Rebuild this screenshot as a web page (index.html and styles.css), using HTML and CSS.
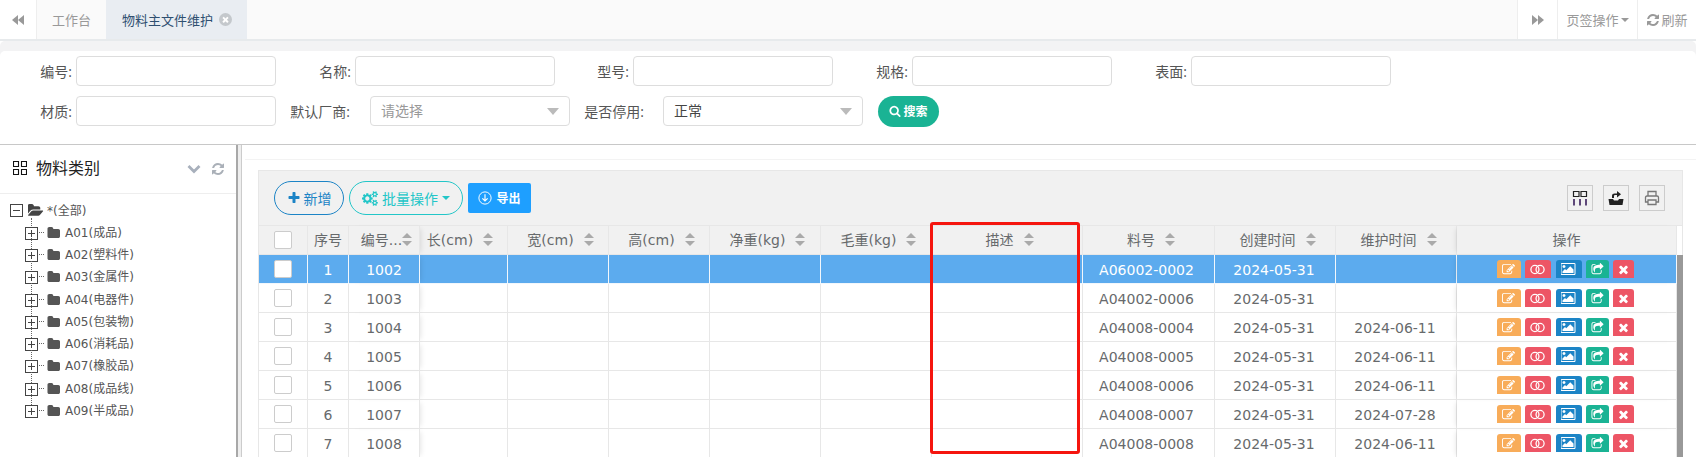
FILE: index.html
```html
<!DOCTYPE html>
<html lang="zh">
<head>
<meta charset="utf-8">
<title>物料主文件维护</title>
<link rel="stylesheet" href="styles.css">
</head>
<body>
<svg class="sprite" xmlns="http://www.w3.org/2000/svg">
  <symbol id="i-refresh" viewBox="0 0 1792 1792"><path d="M1639 1056q0 5-1 7-64 268-268 434.5t-478 166.5q-146 0-282.5-55t-243.5-157l-129 129q-19 19-45 19t-45-19-19-45v-448q0-26 19-45t45-19h448q26 0 45 19t19 45-19 45l-137 137q71 66 161 102t187 36q134 0 250-65t186-179q11-17 53-117 8-23 30-23h192q13 0 22.5 9.5t9.5 22.5zm25-800v448q0 26-19 45t-45 19h-448q-26 0-45-19t-19-45 19-45l138-138q-148-137-349-137-134 0-250 65t-186 179q-11 17-53 117-8 23-30 23h-199q-13 0-22.5-9.5t-9.5-22.5v-7q65-268 270-434.5t480-166.5q146 0 284 55.5t245 156.5l130-129q19-19 45-19t45 19 19 45z"/></symbol>
  <symbol id="i-search" viewBox="0 0 1792 1792"><path d="M1216 832q0-185-131.5-316.5t-316.5-131.5-316.5 131.5-131.5 316.5 131.5 316.5 316.5 131.5 316.5-131.5 131.5-316.5zm512 832q0 52-38 90t-90 38q-54 0-90-38l-343-342q-179 124-399 124-143 0-273.5-55.5t-225-150-150-225-55.5-273.5 55.5-273.5 150-225 225-150 273.5-55.5 273.5 55.5 225 150 150 225 55.5 273.5q0 220-124 399l343 343q37 37 37 90z"/></symbol>
  <symbol id="i-plus" viewBox="0 0 1792 1792"><path d="M1600 736v192q0 40-28 68t-68 28h-416v416q0 40-28 68t-68 28h-192q-40 0-68-28t-28-68v-416h-416q-40 0-68-28t-28-68v-192q0-40 28-68t68-28h416v-416q0-40 28-68t68-28h192q40 0 68 28t28 68v416h416q40 0 68 28t28 68z"/></symbol>
  <symbol id="i-times" viewBox="0 0 1792 1792"><path d="M1490 1322q0 40-28 68l-136 136q-28 28-68 28t-68-28l-294-294-294 294q-28 28-68 28t-68-28l-136-136q-28-28-28-68t28-68l294-294-294-294q-28-28-28-68t28-68l136-136q28-28 68-28t68 28l294 294 294-294q28-28 68-28t68 28l136 136q28 28 28 68t-28 68l-294 294 294 294q28 28 28 68z"/></symbol>
  <symbol id="i-folder" viewBox="0 128 1728 1408" preserveAspectRatio="none"><path d="M1728 608v704q0 92-66 158t-158 66h-1216q-92 0-158-66t-66-158v-960q0-92 66-158t158-66h320q92 0 158 66t66 158v32h672q92 0 158 66t66 158z"/></symbol>
  <symbol id="i-folder-open" viewBox="0 0 1920 1792"><path d="M1815 952q0 31-31 66l-336 396q-43 51-120.5 86.5t-143.5 35.5h-1088q-34 0-60.5-13t-26.5-43q0-31 31-66l336-396q43-51 120.5-86.5t143.5-35.5h1088q34 0 60.5 13t26.5 43zm-343-344v160h-832q-94 0-197 47.5t-164 119.5l-337 396-5 6q0-4-.5-12.5t-.5-12.5v-960q0-92 66-158t158-66h320q92 0 158 66t66 158v32h544q92 0 158 66t66 158z"/></symbol>
  <symbol id="i-edit" viewBox="0 0 1792 1792"><path d="M888 1184l116-116-152-152-116 116v56h96v96h56zm440-720q-16-16-33 1l-350 350q-17 17-1 33t33-1l350-350q17-17 1-33zm80 594v190q0 119-84.5 203.5t-203.5 84.5h-832q-119 0-203.5-84.5t-84.5-203.5v-832q0-119 84.5-203.5t203.5-84.5h832q63 0 117 25 15 7 18 23 3 17-9 29l-49 49q-14 14-32 8-23-6-45-6h-832q-66 0-113 47t-47 113v832q0 66 47 113t113 47h832q66 0 113-47t47-113v-126q0-13 9-22l64-64q15-15 35-7t20 29zm-96-738l288 288-672 672h-288v-288zm444 132l-92 92-288-288 92-92q28-28 68-28t68 28l152 152q28 28 28 68t-28 68z"/></symbol>
  <symbol id="i-share" viewBox="0 0 1792 1792"><path d="M1472 989v259q0 119-84.5 203.5t-203.5 84.5h-832q-119 0-203.5-84.5t-84.5-203.5v-832q0-119 84.5-203.5t203.5-84.5h255q13 0 22.5 9.5t9.5 22.5q0 27-26 32-77 26-133 60-10 4-16 4h-112q-66 0-113 47t-47 113v832q0 66 47 113t113 47h832q66 0 113-47t47-113v-214q0-19 18-29 28-13 54-37 16-16 35-8 21 9 21 29zm237-496l-384 384q-18 19-45 19-12 0-25-5-39-17-39-59v-192h-160q-323 0-438 131-119 137-74 473 3 23-20 34-8 2-12 2-16 0-26-13-10-14-21-31t-39.5-68.5-49.5-99.5-38.5-114-17.5-122q0-49 3.5-91t14-90 28-88 47-81.5 68.5-74 94.5-61.5 124.5-48.5 159.5-30.5 196.5-11h160v-192q0-42 39-59 13-5 25-5 26 0 45 19l384 384q19 19 19 45t-19 45z"/></symbol>
  <symbol id="i-picture" viewBox="0 0 1920 1792"><path d="M576 576q0 80-56 136t-136 56-136-56-56-136 56-136 136-56 136 56 56 136zm1024 384v448h-1408v-192l320-320 160 160 512-512zm96-704h-1600q-13 0-22.5 9.5t-9.5 22.5v1216q0 13 9.5 22.5t22.5 9.5h1600q13 0 22.5-9.5t9.5-22.5v-1216q0-13-9.5-22.5t-22.5-9.5zm160 32v1216q0 66-47 113t-113 47h-1600q-66 0-113-47t-47-113v-1216q0-66 47-113t113-47h1600q66 0 113 47t47 113z"/></symbol>
  <symbol id="i-cogs" viewBox="0 0 1920 1792"><path d="M896 896q0-106-75-181t-181-75-181 75-75 181 75 181 181 75 181-75 75-181zm768 512q0-52-38-90t-90-38-90 38-38 90q0 53 37.5 90.5t90.5 37.5 90.5-37.5 37.5-90.5zm0-1024q0-52-38-90t-90-38-90 38-38 90q0 53 37.5 90.5t90.5 37.5 90.5-37.5 37.5-90.5zm-384 421v185q0 10-7 19.5t-16 10.5l-155 24q-11 35-32 76 34 48 90 115 7 11 7 20 0 12-7 19-23 30-82.5 89.5t-78.5 59.5q-11 0-21-7l-115-90q-37 19-77 31-11 108-23 155-7 24-30 24h-186q-11 0-20-7.5t-10-17.5l-23-153q-34-10-75-31l-118 89q-7 7-20 7-11 0-21-8-144-133-144-160 0-9 7-19 10-14 41-53t47-61q-23-44-35-82l-152-24q-10-1-17-9.5t-7-19.5v-185q0-10 7-19.5t16-10.5l155-24q11-35 32-76-34-48-90-115-7-11-7-20 0-12 7-20 22-30 82-89t79-59q11 0 21 7l115 90q34-18 77-32 11-108 23-154 7-24 30-24h186q11 0 20 7.5t10 17.5l23 153q34 10 75 31l118-89q8-7 20-7 11 0 21 8 144 133 144 160 0 8-7 19-12 16-42 54t-45 60q23 48 34 82l152 23q10 2 17 10.5t7 19.5zm640 533v140q0 16-149 31-12 27-30 52 51 113 51 138 0 4-4 7-122 71-124 71-8 0-46-47t-52-68q-20 2-30 2t-30-2q-14 21-52 68t-46 47q-2 0-124-71-4-3-4-7 0-25 51-138-18-25-30-52-149-15-149-31v-140q0-16 149-31 13-29 30-52-51-113-51-138 0-4 4-7 4-2 35-20t59-34 30-16q8 0 46 46.5t52 67.5q20-2 30-2t30 2q51-71 92-112l6-2q4 0 124 70 4 3 4 7 0 25-51 138 17 23 30 52 149 15 149 31zm0-1024v140q0 16-149 31-12 27-30 52 51 113 51 138 0 4-4 7-122 71-124 71-8 0-46-47t-52-68q-20 2-30 2t-30-2q-14 21-52 68t-46 47q-2 0-124-71-4-3-4-7 0-25 51-138-18-25-30-52-149-15-149-31v-140q0-16 149-31 13-29 30-52-51-113-51-138 0-4 4-7 4-2 35-20t59-34 30-16q8 0 46 46.5t52 67.5q20-2 30-2t30 2q51-71 92-112l6-2q4 0 124 70 4 3 4 7 0 25-51 138 17 23 30 52 149 15 149 31z"/></symbol>
  <symbol id="i-rings" viewBox="0 0 16 12"><circle cx="5.2" cy="6" r="4.4" fill="none" stroke="currentColor" stroke-width="1.4"/><circle cx="10.8" cy="6" r="4.4" fill="none" stroke="currentColor" stroke-width="1.4"/></symbol>
  <symbol id="i-tb-cols" viewBox="0 0 16 16"><path d="M1.5 1.5h5.5v5h-5.500zM9 1.500h5.500v5H9z" fill="none" stroke="#222" stroke-width="1.2"/><path d="M2 9v6.500M8 9v6.500M14 9v6.500" fill="none" stroke="#3a1f5c" stroke-width="1.600"/></symbol>
  <symbol id="i-tb-export" viewBox="0 0 16 16"><path d="M0.500 9h4.500l1 1.500h4L11 9h4.500l-1 6H1.500z" fill="#222"/><path d="M4 8V5.500q0-2 2.500-2H9V1l4 3.200L9 7.400V5H7q-1 0-1 1v2z" fill="#222"/></symbol>
  <symbol id="i-tb-print" viewBox="0 0 16 16"><path d="M4 6V1.500h8V6M4 12H1.500V7.500q0-1.500 1.500-1.500h10q1.500 0 1.500 1.500V12H12M4 10h8v4.500H4z" fill="none" stroke="#777" stroke-width="1.300"/></symbol>
  <symbol id="i-download" viewBox="0 0 16 16"><circle cx="8" cy="8" r="7" fill="none" stroke="currentColor" stroke-width="1.100"/><path d="M8 3.800v7.400M5 8.400l3 3 3-3" fill="none" stroke="currentColor" stroke-width="1.300"/></symbol>
  <symbol id="i-title" viewBox="0 0 14 14"><path d="M.5.500h5v5h-5zM8.500.500h5v5h-5zM.5 8.500h5v5h-5zM8.500 8.500h5v5h-5z" fill="none" stroke="#111" stroke-width="1.100"/></symbol>
  <symbol id="i-chevron" viewBox="0 0 14 10"><path d="M1.500 2l5.500 5.500L12.500 2" fill="none" stroke="currentColor" stroke-width="2.800"/></symbol>
</svg>

<header class="tabbar">
  <div class="tab-nav"><span class="tri-left"></span><span class="tri-left"></span></div>
  <div class="tab">工作台</div>
  <div class="tab tab-active">物料主文件维护<span class="tab-close"><svg class="ico-close"><use href="#i-times"/></svg></span></div>
  <div class="tab-spacer"></div>
  <div class="tab-tool tool-fwd"><span class="tri-right"></span><span class="tri-right"></span></div>
  <div class="tab-tool tool-ops">页签操作<span class="caret"></span></div>
  <div class="tab-tool tool-refresh"><svg class="ico-13"><use href="#i-refresh"/></svg>刷新</div>
</header>

<section class="filter">
  <div class="form-row">
    <div class="field field-first"><label class="lbl">编号:</label><input class="ctl" type="text"></div>
    <div class="field"><label class="lbl">名称:</label><input class="ctl" type="text"></div>
    <div class="field field-narrow"><label class="lbl">型号:</label><input class="ctl" type="text"></div>
    <div class="field"><label class="lbl">规格:</label><input class="ctl" type="text"></div>
    <div class="field"><label class="lbl">表面:</label><input class="ctl" type="text"></div>
  </div>
  <div class="form-row">
    <div class="field field-first"><label class="lbl">材质:</label><input class="ctl" type="text"></div>
    <div class="field field-sel1"><label class="lbl">默认厂商:</label><div class="ctl sel sel-ph"><span class="sel-text">请选择</span><span class="sel-arrow"></span></div></div>
    <div class="field field-sel2"><label class="lbl">是否停用:</label><div class="ctl sel"><span class="sel-text">正常</span><span class="sel-arrow"></span></div></div>
    <button class="btn-search"><svg class="ico-12"><use href="#i-search"/></svg>搜索</button>
  </div>
</section>

<main class="main">
  <aside class="side">
    <div class="side-head">
      <svg class="ico-title"><use href="#i-title"/></svg>
      <span class="side-title">物料类别</span>
      <svg class="ico-chev"><use href="#i-chevron"/></svg>
      <svg class="ico-srefresh"><use href="#i-refresh"/></svg>
    </div>
    <ul class="tree">
      <li class="node node-root"><span class="box box-minus"></span><svg class="ico-fopen"><use href="#i-folder-open"/></svg><span class="node-text">*(全部)</span></li>
      <li class="node"><span class="box"></span><span class="dots"></span><svg class="ico-folder"><use href="#i-folder"/></svg><span class="node-text">A01(成品)</span></li>
      <li class="node"><span class="box"></span><span class="dots"></span><svg class="ico-folder"><use href="#i-folder"/></svg><span class="node-text">A02(塑料件)</span></li>
      <li class="node"><span class="box"></span><span class="dots"></span><svg class="ico-folder"><use href="#i-folder"/></svg><span class="node-text">A03(金属件)</span></li>
      <li class="node"><span class="box"></span><span class="dots"></span><svg class="ico-folder"><use href="#i-folder"/></svg><span class="node-text">A04(电器件)</span></li>
      <li class="node"><span class="box"></span><span class="dots"></span><svg class="ico-folder"><use href="#i-folder"/></svg><span class="node-text">A05(包装物)</span></li>
      <li class="node"><span class="box"></span><span class="dots"></span><svg class="ico-folder"><use href="#i-folder"/></svg><span class="node-text">A06(消耗品)</span></li>
      <li class="node"><span class="box"></span><span class="dots"></span><svg class="ico-folder"><use href="#i-folder"/></svg><span class="node-text">A07(橡胶品)</span></li>
      <li class="node"><span class="box"></span><span class="dots"></span><svg class="ico-folder"><use href="#i-folder"/></svg><span class="node-text">A08(成品线)</span></li>
      <li class="node node-last"><span class="box"></span><span class="dots"></span><svg class="ico-folder"><use href="#i-folder"/></svg><span class="node-text">A09(半成品)</span></li>
    </ul>
  </aside>
  <div class="splitter"></div>
  <section class="content">
    <div class="grid-panel">
      <div class="toolbar">
        <button class="pill pill-blue"><svg class="ico-14"><use href="#i-plus"/></svg>新增</button>
        <button class="pill pill-teal"><svg class="ico-cogs"><use href="#i-cogs"/></svg>批量操作<span class="caret caret-teal"></span></button>
        <button class="btn-export"><svg class="ico-dl"><use href="#i-download"/></svg>导出</button>
        <div class="tool-right">
          <button class="tool-btn"><svg class="ico-tb"><use href="#i-tb-cols"/></svg></button>
          <button class="tool-btn"><svg class="ico-tb"><use href="#i-tb-export"/></svg></button>
          <button class="tool-btn"><svg class="ico-tb"><use href="#i-tb-print"/></svg></button>
        </div>
      </div>
      <div class="table-wrap">
        <table class="grid">
          <colgroup>
            <col class="c-check"><col class="c-seq"><col class="c-code"><col class="c-len"><col class="c-wid"><col class="c-hei"><col class="c-net"><col class="c-gross"><col class="c-desc"><col class="c-part"><col class="c-date"><col class="c-date"><col class="c-act">
          </colgroup>
          <thead>
            <tr>
              <th><span class="check"></span></th>
              <th><span class="th-in">序号</span></th>
              <th class="fix-l"><span class="th-in th-s">编号...<span class="sort sort-tight"></span></span></th>
              <th><span class="th-in th-len">长(cm)<span class="sort"></span></span></th>
              <th><span class="th-in th-s">宽(cm)<span class="sort"></span></span></th>
              <th><span class="th-in th-s">高(cm)<span class="sort"></span></span></th>
              <th><span class="th-in th-s">净重(kg)<span class="sort"></span></span></th>
              <th><span class="th-in th-s">毛重(kg)<span class="sort"></span></span></th>
              <th><span class="th-in th-s">描述<span class="sort"></span></span></th>
              <th><span class="th-in th-s">料号<span class="sort"></span></span></th>
              <th><span class="th-in th-s">创建时间<span class="sort"></span></span></th>
              <th><span class="th-in th-s">维护时间<span class="sort"></span></span></th>
              <th class="fix-r"><span class="th-in">操作</span></th>
            </tr>
          </thead>
          <tbody>
            <tr class="sel-row"><td><span class="check"></span></td><td class="txt">1</td><td class="txt fix-l">1002</td><td></td><td></td><td></td><td></td><td></td><td></td><td class="txt nudge-2">A06002-0002</td><td class="txt nudge-1">2024-05-31</td><td class="txt nudge-1"></td><td class="fix-r"><div class="acts"><span class="act a-edit"><svg class="ai"><use href="#i-edit"/></svg></span><span class="act a-ring"><svg class="ai-ring"><use href="#i-rings"/></svg></span><span class="act a-pic"><svg class="ai-pic"><use href="#i-picture"/></svg></span><span class="act a-share"><svg class="ai"><use href="#i-share"/></svg></span><span class="act a-del"><svg class="ai"><use href="#i-times"/></svg></span></div></td></tr>
            <tr><td><span class="check"></span></td><td class="txt">2</td><td class="txt fix-l">1003</td><td></td><td></td><td></td><td></td><td></td><td></td><td class="txt nudge-2">A04002-0006</td><td class="txt nudge-1">2024-05-31</td><td class="txt nudge-1"></td><td class="fix-r"><div class="acts"><span class="act a-edit"><svg class="ai"><use href="#i-edit"/></svg></span><span class="act a-ring"><svg class="ai-ring"><use href="#i-rings"/></svg></span><span class="act a-pic"><svg class="ai-pic"><use href="#i-picture"/></svg></span><span class="act a-share"><svg class="ai"><use href="#i-share"/></svg></span><span class="act a-del"><svg class="ai"><use href="#i-times"/></svg></span></div></td></tr>
            <tr><td><span class="check"></span></td><td class="txt">3</td><td class="txt fix-l">1004</td><td></td><td></td><td></td><td></td><td></td><td></td><td class="txt nudge-2">A04008-0004</td><td class="txt nudge-1">2024-05-31</td><td class="txt nudge-1">2024-06-11</td><td class="fix-r"><div class="acts"><span class="act a-edit"><svg class="ai"><use href="#i-edit"/></svg></span><span class="act a-ring"><svg class="ai-ring"><use href="#i-rings"/></svg></span><span class="act a-pic"><svg class="ai-pic"><use href="#i-picture"/></svg></span><span class="act a-share"><svg class="ai"><use href="#i-share"/></svg></span><span class="act a-del"><svg class="ai"><use href="#i-times"/></svg></span></div></td></tr>
            <tr><td><span class="check"></span></td><td class="txt">4</td><td class="txt fix-l">1005</td><td></td><td></td><td></td><td></td><td></td><td></td><td class="txt nudge-2">A04008-0005</td><td class="txt nudge-1">2024-05-31</td><td class="txt nudge-1">2024-06-11</td><td class="fix-r"><div class="acts"><span class="act a-edit"><svg class="ai"><use href="#i-edit"/></svg></span><span class="act a-ring"><svg class="ai-ring"><use href="#i-rings"/></svg></span><span class="act a-pic"><svg class="ai-pic"><use href="#i-picture"/></svg></span><span class="act a-share"><svg class="ai"><use href="#i-share"/></svg></span><span class="act a-del"><svg class="ai"><use href="#i-times"/></svg></span></div></td></tr>
            <tr><td><span class="check"></span></td><td class="txt">5</td><td class="txt fix-l">1006</td><td></td><td></td><td></td><td></td><td></td><td></td><td class="txt nudge-2">A04008-0006</td><td class="txt nudge-1">2024-05-31</td><td class="txt nudge-1">2024-06-11</td><td class="fix-r"><div class="acts"><span class="act a-edit"><svg class="ai"><use href="#i-edit"/></svg></span><span class="act a-ring"><svg class="ai-ring"><use href="#i-rings"/></svg></span><span class="act a-pic"><svg class="ai-pic"><use href="#i-picture"/></svg></span><span class="act a-share"><svg class="ai"><use href="#i-share"/></svg></span><span class="act a-del"><svg class="ai"><use href="#i-times"/></svg></span></div></td></tr>
            <tr><td><span class="check"></span></td><td class="txt">6</td><td class="txt fix-l">1007</td><td></td><td></td><td></td><td></td><td></td><td></td><td class="txt nudge-2">A04008-0007</td><td class="txt nudge-1">2024-05-31</td><td class="txt nudge-1">2024-07-28</td><td class="fix-r"><div class="acts"><span class="act a-edit"><svg class="ai"><use href="#i-edit"/></svg></span><span class="act a-ring"><svg class="ai-ring"><use href="#i-rings"/></svg></span><span class="act a-pic"><svg class="ai-pic"><use href="#i-picture"/></svg></span><span class="act a-share"><svg class="ai"><use href="#i-share"/></svg></span><span class="act a-del"><svg class="ai"><use href="#i-times"/></svg></span></div></td></tr>
            <tr><td><span class="check"></span></td><td class="txt">7</td><td class="txt fix-l">1008</td><td></td><td></td><td></td><td></td><td></td><td></td><td class="txt nudge-2">A04008-0008</td><td class="txt nudge-1">2024-05-31</td><td class="txt nudge-1">2024-06-11</td><td class="fix-r"><div class="acts"><span class="act a-edit"><svg class="ai"><use href="#i-edit"/></svg></span><span class="act a-ring"><svg class="ai-ring"><use href="#i-rings"/></svg></span><span class="act a-pic"><svg class="ai-pic"><use href="#i-picture"/></svg></span><span class="act a-share"><svg class="ai"><use href="#i-share"/></svg></span><span class="act a-del"><svg class="ai"><use href="#i-times"/></svg></span></div></td></tr>
          </tbody>
        </table>
        <div class="scrollbar"></div>
      </div>
      <div class="highlight"></div>
    </div>
  </section>
</main>
</body>
</html>
```

FILE: styles.css
```css
* { box-sizing: border-box; }
html, body { margin: 0; padding: 0; }
body {
  width: 1696px;
  height: 457px;
  overflow: hidden;
  background: #fff;
  font-family: "Open Sans", "Noto Sans CJK SC", sans-serif;
  font-size: 13px;
  color: #676a6c;
}
.sprite { display: none; }
svg { fill: currentColor; display: block; }
button { font-family: inherit; cursor: pointer; padding: 0; }

/* tab bar */
.tabbar {
  display: flex;
  height: 41px;
  background: #fafafa;
  border-bottom: 2px solid #e7eaec;
  color: #999;
}
.tab-nav {
  width: 37px;
  padding-right: 1px;
  background: #fff;
  border-right: 1px solid #eee;
  display: flex;
  align-items: center;
  justify-content: center;
}
.tri-left, .tri-right { width: 0; height: 0; border-top: 5.5px solid transparent; border-bottom: 5.5px solid transparent; }
.tri-left { border-right: 6px solid #999; }
.tri-right { border-left: 6px solid #999; }
.tab {
  display: flex;
  align-items: center;
  padding: 0 15px;
  width: 69px;
  justify-content: center;
  color: #999;
  font-size: 13px;
}
.tab-active {
  width: 141px;
  background: #e9edf2;
  color: #2f4f70;
  padding: 0 0 0 16px;
  justify-content: flex-start;
}
.tab-close {
  width: 13px;
  height: 13px;
  margin-left: 6px;
  border-radius: 50%;
  background: #c4c8cc;
  color: #fff;
  display: flex;
  align-items: center;
  justify-content: center;
}
.ico-close { width: 9px; height: 9px; }
.tab-spacer { flex: 1; }
.tab-tool {
  display: flex;
  align-items: center;
  justify-content: center;
  background: #fff;
  border-left: 1px solid #eee;
  color: #999;
}
.tool-fwd { width: 40px; }
.tool-ops { width: 80px; }
.tool-refresh { width: 59px; }
.caret {
  display: inline-block;
  width: 0;
  height: 0;
  margin-left: 2px;
  border-top: 4px solid #999;
  border-left: 4px solid transparent;
  border-right: 4px solid transparent;
}
.ico-13 { width: 14px; height: 14px; margin-right: 1px; }
.ico-12 { width: 12px; height: 12px; margin-right: 2px; }

/* filter */
.filter {
  margin-top: 10px;
  height: 94px;
  padding-top: 5px;
  background: #fff;
  border-radius: 5px 5px 0 0;
  border-bottom: 1px solid #c8c8c8;
  box-shadow: 0 -10px 0 0 #f3f3f4, 0 -1px 2px rgba(0,0,0,.05);
  display: flex;
  flex-direction: column;
  gap: 10px;
}
.form-row { display: flex; align-items: center; height: 30px; }
.field { display: flex; align-items: center; justify-content: flex-end; width: 279px; }
.field-narrow { width: 278px; }
.field-first { width: 276px; }
.field-sel1 { width: 294px; }
.field-sel1 .lbl { margin-right: 20px; }
.field-sel2 { width: 293px; }
.field-sel2 .lbl { margin-right: 19px; }
.lbl { margin-right: 4px; font-size: 14px; color: #555; white-space: nowrap; }
.ctl {
  width: 200px;
  height: 30px;
  flex: none;
  border: 1px solid #ddd;
  border-radius: 4px;
  background: #fff;
  outline: none;
}
.sel {
  display: flex;
  align-items: center;
  justify-content: space-between;
  padding: 0 10px 0 10px;
  font-size: 14px;
  color: #444;
}
.sel-text { padding-bottom: 2px; }
.sel-ph { color: #999; }
.sel-arrow {
  width: 0;
  height: 0;
  border-top: 7px solid #bbb;
  border-left: 6px solid transparent;
  border-right: 6px solid transparent;
}
.btn-search {
  margin-left: 15px;
  width: 61px;
  height: 31px;
  border: 0;
  border-radius: 16px;
  background: #1ab394;
  color: #fff;
  font-size: 12px;
  font-weight: 700;
  display: flex;
  align-items: center;
  justify-content: center;
}

/* main */
.main { display: flex; height: 312px; }
.side { width: 236px; flex: none; }
.side-head {
  height: 49px;
  border-bottom: 1px solid #eee;
  display: flex;
  align-items: center;
  padding-left: 13px;
}
.ico-title { width: 14px; height: 14px; margin-top: -3px; }
.side-title { margin-left: 9px; padding-bottom: 4px; font-size: 16px; color: #222; width: 151px; }
.ico-chev { width: 14px; height: 10px; color: #a8b0bc; }
.ico-srefresh { width: 14px; height: 14px; margin-left: 10px; color: #aab0b8; }
.tree { list-style: none; margin: 0; padding: 5px 0 0 25px; font-family: "DejaVu Sans", "Noto Sans CJK SC", sans-serif; font-size: 12px; color: #555; }
.node { position: relative; display: flex; align-items: center; height: 22.25px; }
.node-root { margin-left: -15px; }
.node-text { padding-bottom: 2px; margin-left: -2px; }
.box {
  position: relative;
  width: 13px;
  height: 13px;
  flex: none;
  border: 1px solid #444;
  background:
    linear-gradient(#444, #444) center / 7px 1px no-repeat,
    linear-gradient(#444, #444) center / 1px 7px no-repeat,
    #fff;
  margin-top: 2px;
}
.box-minus {
  background: linear-gradient(#444, #444) center / 7px 1px no-repeat, #fff;
  margin-top: 0;
}
.node:not(.node-root):not(.node-last)::after {
  content: "";
  position: absolute;
  left: 6px;
  top: 17px;
  height: 11px;
  border-left: 1px dotted #666;
}
.node:nth-child(2)::before {
  content: "";
  position: absolute;
  left: 6px;
  top: -3px;
  height: 8px;
  border-left: 1px dotted #666;
}
.dots { width: 5px; margin: 0 3px 0 1px; border-top: 1px dotted #666; flex: none; }
.ico-fopen { width: 16px; height: 15px; color: #444; margin: 0 5px 0 5px; flex: none; }
.ico-folder { width: 13px; height: 11px; color: #555; margin-right: 7px; flex: none; }

.splitter {
  width: 6px;
  flex: none;
  background: #eee;
  border-left: 2px solid #a8a8a8;
  border-right: 1px solid #ccc;
}

/* content */
.content { flex: 1; min-width: 0; padding: 14px 13px 0 16px; }
.content::before {
  content: "";
  display: block;
  margin: 0 -13px 10px -13px;
  border-top: 1px solid #f3f3f3;
}
.grid-panel {
  position: relative;
  border: 1px solid #e7e7e7;
  border-bottom: 0;
  background: #f1f1f1;
}
.toolbar {
  display: flex;
  align-items: center;
  height: 55px;
  padding-left: 15px;
  gap: 5px;
  border-bottom: 1px solid #e7e7e7;
}
.pill {
  height: 34px;
  border-radius: 17px;
  background: transparent;
  font-size: 14px;
  display: flex;
  align-items: center;
  justify-content: center;
}
.pill-blue { width: 70px; border: 1px solid #1c84c6; color: #1c84c6; }
.pill-teal { width: 114px; border: 1px solid #23c6c8; color: #23c6c8; }
.ico-14 { width: 14px; height: 14px; margin-right: 3px; }
.ico-cogs { width: 16px; height: 15px; margin-right: 4px; }
.caret-teal { border-top-color: #23c6c8; margin-left: 4px; }
.btn-export {
  width: 63px;
  height: 30px;
  border: 0;
  border-radius: 2px;
  background: #1e9fff;
  color: #fff;
  font-size: 12px;
  font-weight: 700;
  display: flex;
  align-items: center;
  justify-content: center;
}
.ico-dl { width: 14px; height: 14px; margin-right: 4px; }
.tool-right { margin-left: auto; display: flex; gap: 10px; padding-right: 17px; }
.tool-btn {
  width: 26px;
  height: 26px;
  border: 1px solid #ccc;
  background: transparent;
  display: flex;
  align-items: center;
  justify-content: center;
}
.ico-tb { width: 16px; height: 16px; }

.table-wrap { display: flex; background: #fff; }
.grid { table-layout: fixed; border-collapse: separate; border-spacing: 0; width: 1418px; flex: none; background: #fff; font-family: "DejaVu Sans", "Noto Sans CJK SC", sans-serif; font-size: 14px; color: #676a6c; }
.c-check { width: 49px; } .c-seq { width: 41px; } .c-code { width: 71px; }
.c-len { width: 88px; } .c-wid { width: 101px; } .c-hei { width: 101px; }
.c-net { width: 111px; } .c-gross { width: 111px; } .c-desc { width: 151px; }
.c-part { width: 132px; } .c-date { width: 121px; } .c-act { width: 220px; }
.grid th, .grid td {
  padding: 0;
  text-align: center;
  border-right: 1px solid #e7e7e7;
  border-bottom: 1px solid #e7e7e7;
  white-space: nowrap;
  overflow: hidden;
}
.grid th { height: 29px; background: #f1f1f1; font-weight: 400; }
.grid td { height: 29px; }
.grid td.txt { padding-top: 2px; }
.grid td.nudge-2 { padding-right: 4px; }
.grid td.nudge-1 { padding-right: 2px; }
.th-in { display: inline-flex; align-items: center; justify-content: center; padding-bottom: 2px; vertical-align: middle; }
.th-s { padding-left: 5px; }
.th-len { padding-right: 7px; }
.sort { display: inline-flex; flex-direction: column; justify-content: space-between; width: 10px; height: 13px; margin-left: 10px; flex: none; }
.sort::before, .sort::after { content: ""; width: 0; height: 0; border-left: 5px solid transparent; border-right: 5px solid transparent; }
.sort::before { border-bottom: 5px solid #aaa; }
.sort::after { border-top: 5px solid #aaa; }
.sort-tight { margin-left: 0; }
.check { display: inline-block; vertical-align: middle; width: 18px; height: 18px; border: 1px solid #ccc; border-radius: 2px; background: #fff; }
.sel-row td { background: #5cabee; color: #fff; border-right-color: #f2f7fc; border-bottom-color: #f2f7fc; }
.fix-l { position: relative; box-shadow: 4px 0 5px -3px rgba(0,0,0,.10); }
.fix-r { position: relative; box-shadow: -4px 0 5px -3px rgba(0,0,0,.10); }
.acts { display: flex; justify-content: center; gap: 4px; height: 18px; padding-right: 3px; }
.act { display: flex; align-items: center; justify-content: center; height: 18px; border-radius: 3px 3px 0 0; color: #fff; }
.a-edit { width: 24px; background: #f8ac59; }
.a-ring { width: 26px; background: #ed5565; }
.a-pic { width: 26px; background: #1c84c6; margin-left: 1px; }
.a-share { width: 23px; background: #1ab394; }
.a-del { width: 21px; background: #ed5565; }
.ai { width: 13px; height: 13px; }
.ai-ring { width: 15px; height: 11px; }
.ai-pic { width: 15px; height: 14px; }
.scrollbar { width: 6px; flex: none; margin-top: 29px; background: #999; }
.highlight {
  position: absolute;
  left: 671px;
  top: 51px;
  width: 150px;
  height: 232px;
  border: 3px solid #f5150f;
  border-radius: 3px;
  pointer-events: none;
}
```
